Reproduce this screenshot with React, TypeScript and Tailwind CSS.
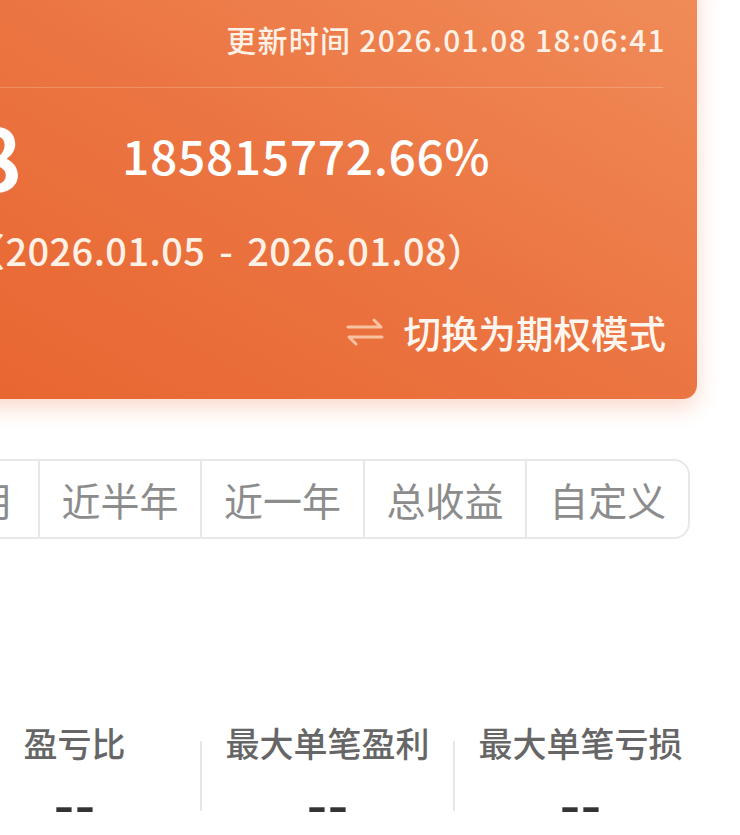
import React from "react";

const font = { fontFamily: '"Noto Sans CJK SC", "Noto Sans", sans-serif' };

function SwapIcon() {
  return (
    <svg width="40" height="32" viewBox="0 0 40 32" fill="none" stroke="#f9c3a1" strokeWidth="3" strokeLinecap="round" strokeLinejoin="round">
      <path d="M3 11H36L29 4" />
      <path d="M37 21H4L11 28" />
    </svg>
  );
}

export default function App() {
  const tabs = ["近一月", "近半年", "近一年", "总收益", "自定义"];
  const stats = ["盈亏比", "最大单笔盈利", "最大单笔亏损"];
  return (
    <div className="w-[740px] h-[835px] overflow-hidden bg-white" style={font}>
      {/* summary card */}
      <div className="-mt-[30px] -ml-[60px] w-[757px] pt-[30px] pb-[33px] pl-[60px] pr-[31px] rounded-[14px] bg-linear-to-tr from-[#e8652f] via-[#eb7542] to-[#f08d5a] shadow-[0_8px_22px_rgba(236,110,60,0.28)]">
        <div className="h-[78px] flex items-center justify-end text-[30px] font-medium tracking-[1.3px] text-[#fff1e6] whitespace-nowrap">
          更新时间 2026.01.08 18:06:41
        </div>
        <div className="mt-[9px] mr-[3px] h-px bg-white/20" />
        <div className="h-[132px] flex items-center whitespace-nowrap">
          <div className="w-[22px] flex justify-end">
            <span className="text-[88px] font-bold text-white leading-none">8</span>
          </div>
          <span className="ml-[100px] text-[48px] font-medium tracking-[0.6px] text-white leading-none">185815772.66%</span>
        </div>
        <div className="h-[60px] flex items-center whitespace-nowrap">
          <span className="-ml-[33px] text-[38px] font-medium tracking-[0.4px] [word-spacing:5px] text-[#fff1e6] leading-none">（2026.01.05 - 2026.01.08）</span>
        </div>
        <div className="mt-[18px] h-[68px] flex items-center justify-end gap-[19px] whitespace-nowrap">
          <SwapIcon />
          <span className="text-[37.5px] font-medium text-[#fff6ef] leading-none">切换为期权模式</span>
        </div>
      </div>

      {/* period tabs */}
      <div className="mt-[60px] -ml-[127px] w-[817px] h-[80px] grid grid-cols-5 border-2 border-[#e8e8e8] rounded-[16px] overflow-hidden">
        {tabs.map((t, i) => (
          <div
            key={t}
            className={`flex items-center justify-center text-[39px] text-[#8c8c8c] whitespace-nowrap ${i > 0 ? "border-l-2 border-[#e8e8e8]" : ""}`}
          >
            {t}
          </div>
        ))}
      </div>

      {/* stats */}
      <div className="mt-[176px] -ml-[51px] w-[757px] flex">
        {stats.map((s, i) => (
          <React.Fragment key={s}>
            {i > 0 && <div className="mt-[26px] w-[2px] h-[70px] bg-[#e6e6e6]" />}
            <div className="flex-1 flex flex-col items-center">
              <div className="h-[54px] flex items-center text-[34px] font-medium text-[#666666] whitespace-nowrap">{s}</div>
              <div className="mt-[17px] h-[40px] flex items-center text-[58px] text-[#333333] leading-none" style={{ fontFamily: '"DejaVu Sans", sans-serif' }}>--</div>
            </div>
          </React.Fragment>
        ))}
      </div>
    </div>
  );
}
